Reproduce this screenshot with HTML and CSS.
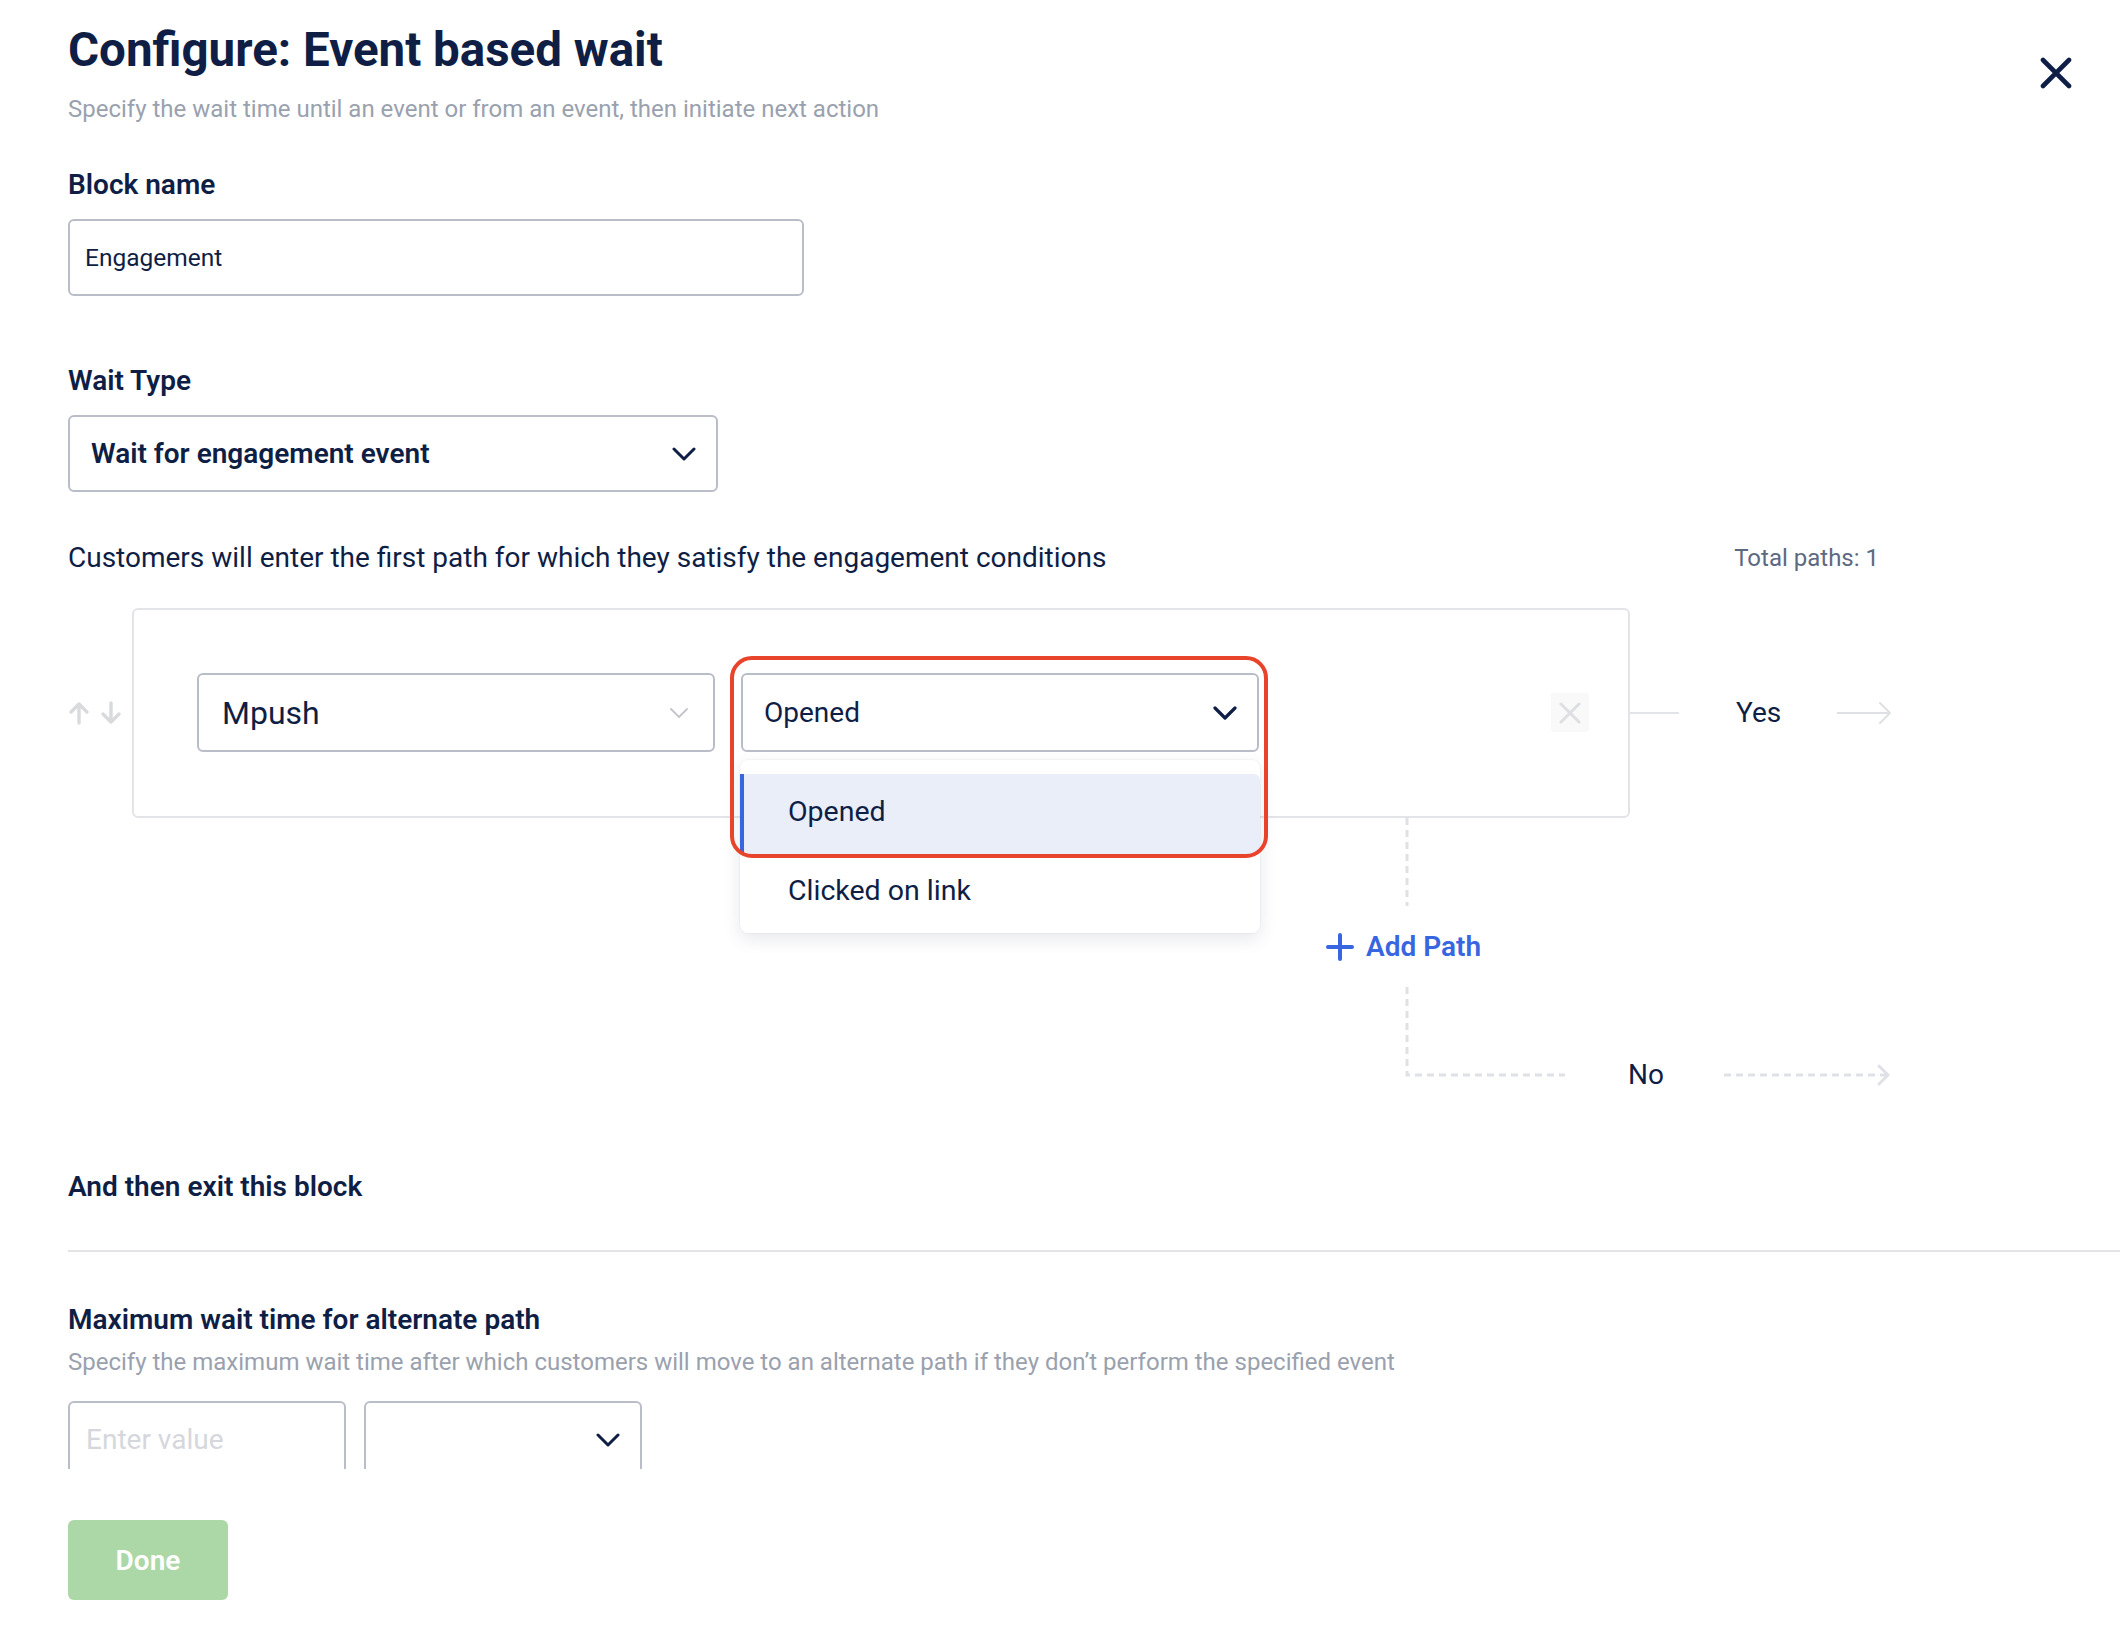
FILE: index.html
```html
<!DOCTYPE html>
<html lang="en">
<head>
<meta charset="utf-8">
<title>Configure: Event based wait</title>
<link rel="stylesheet" href="styles.css">
</head>
<body>
<div class="page">
  <header class="header">
    <div class="header-text">
      <h1 class="title">Configure: Event based wait</h1>
      <p class="subtitle">Specify the wait time until an event or from an event, then initiate next action</p>
    </div>
    <button class="close-btn" aria-label="Close">
      <svg width="32" height="32" viewBox="0 0 32 32"><path d="M3 3 L29 29 M29 3 L3 29" fill="none" stroke="#0f1e45" stroke-width="4.6" stroke-linecap="round"/></svg>
    </button>
  </header>

  <section class="field field-block">
    <div class="label">Block name</div>
    <div class="input input-name">Engagement</div>
  </section>

  <section class="field field-wait">
    <div class="label">Wait Type</div>
    <div class="select select-wait">
      <span>Wait for engagement event</span>
      <svg width="24" height="14" viewBox="0 0 24 14"><path d="M2 2 L12 12 L22 2" fill="none" stroke="#0f1e45" stroke-width="3" stroke-linecap="round" stroke-linejoin="round"/></svg>
    </div>
  </section>

  <div class="paths-head">
    <p class="paths-desc">Customers will enter the first path for which they satisfy the engagement conditions</p>
    <span class="paths-total">Total paths: 1</span>
  </div>

  <div class="path-row">
    <div class="reorder">
      <svg width="22" height="24" viewBox="0 0 22 24"><path d="M11 22 V3 M3 11 L11 3 L19 11" fill="none" stroke="#d9dadd" stroke-width="3.4" stroke-linecap="round" stroke-linejoin="round"/></svg>
      <svg width="22" height="24" viewBox="0 0 22 24"><path d="M11 2 V21 M3 13 L11 21 L19 13" fill="none" stroke="#d9dadd" stroke-width="3.4" stroke-linecap="round" stroke-linejoin="round"/></svg>
    </div>
    <div class="path-card">
      <div class="select select-channel">
        <span>Mpush</span>
        <svg width="18" height="10" viewBox="0 0 18 10"><path d="M1 1 L9 9 L17 1" fill="none" stroke="#c3c5cb" stroke-width="1.8" stroke-linecap="round" stroke-linejoin="round"/></svg>
      </div>
      <div class="event-wrap">
        <div class="select select-event">
          <span>Opened</span>
          <svg width="24" height="14" viewBox="0 0 24 14"><path d="M2 2 L12 12 L22 2" fill="none" stroke="#0f1e45" stroke-width="3.2" stroke-linecap="round" stroke-linejoin="round"/></svg>
        </div>
        <ul class="menu">
          <li class="menu-item active">Opened</li>
          <li class="menu-item second">Clicked on link</li>
        </ul>
        <div class="highlight"></div>
      </div>
      <button class="remove-btn" aria-label="Remove path">
        <svg width="24" height="22" viewBox="0 0 24 22"><path d="M3 2 L21 20 M21 2 L3 20" fill="none" stroke="#dedfe3" stroke-width="3" stroke-linecap="round"/></svg>
      </button>
    </div>
    <div class="yes-line"></div>
    <span class="branch-label yes-label">Yes</span>
    <svg class="yes-arrow" width="56" height="24" viewBox="0 0 56 24"><path d="M0 12 H53 M43 2 L53 12 L43 22" fill="none" stroke="#dfe0e4" stroke-width="2" stroke-linecap="round" stroke-linejoin="round"/></svg>
  </div>

  <div class="branch">
    <svg class="vdash" width="4" height="88" viewBox="0 0 4 88"><line x1="2" y1="0" x2="2" y2="88" stroke="#e0e1e6" stroke-width="3" stroke-dasharray="7 5"/></svg>
    <button class="add-path">
      <svg width="28" height="28" viewBox="0 0 28 28"><path d="M14 2 V26 M2 14 H26" fill="none" stroke="#3766e0" stroke-width="4" stroke-linecap="round"/></svg>
      <span>Add Path</span>
    </button>
    <div class="no-row">
      <svg width="162" height="176" viewBox="0 0 162 176"><path d="M2 0 V88 H160" fill="none" stroke="#e0e1e6" stroke-width="3" stroke-dasharray="7 5"/></svg>
      <span class="branch-label no-label">No</span>
      <svg class="no-arrow" width="168" height="24" viewBox="0 0 168 24"><path d="M0 12 H162" fill="none" stroke="#e0e1e6" stroke-width="3" stroke-dasharray="7 5"/><path d="M155 3 L164 12 L155 21" fill="none" stroke="#e0e1e6" stroke-width="3" stroke-linecap="round" stroke-linejoin="round"/></svg>
    </div>
  </div>

  <div class="section-title exit-title">And then exit this block</div>
  <div class="divider"></div>
  <div class="section-title max-title">Maximum wait time for alternate path</div>
  <p class="hint">Specify the maximum wait time after which customers will move to an alternate path if they don’t perform the specified event</p>
  <div class="wait-inputs">
    <div class="input input-value"><span class="placeholder">Enter value</span></div>
    <div class="select select-unit">
      <svg width="24" height="14" viewBox="0 0 24 14"><path d="M2 2 L12 12 L22 2" fill="none" stroke="#0f1e45" stroke-width="3" stroke-linecap="round" stroke-linejoin="round"/></svg>
    </div>
  </div>
  <button class="done-btn">Done</button>
</div>
</body>
</html>
```

FILE: styles.css
```css
* { box-sizing: border-box; }

body {
  margin: 0;
  background: #ffffff;
  color: #0f1e45;
  font-family: Roboto, "Noto Sans", "Liberation Sans", sans-serif;
}

button {
  font-family: inherit;
  cursor: pointer;
}

.page {
  padding: 22px 0 60px 68px;
}

/* Header */
.header {
  display: flex;
  justify-content: space-between;
  align-items: flex-start;
  padding-right: 48px;
}

.title {
  margin: 0;
  font-size: 47.5px;
  line-height: 56px;
  font-weight: 700;
}

.subtitle {
  margin: 16px 0 0;
  font-size: 24px;
  line-height: 30px;
  color: #9aa1ae;
}

.close-btn {
  margin-top: 35px;
  padding: 0;
  border: 0;
  background: none;
  display: block;
  line-height: 0;
}

/* Fields */
.field-block { margin-top: 44px; }
.field-wait { margin-top: 68px; }

.label {
  font-size: 28px;
  line-height: 34px;
  font-weight: 600;
}

.input,
.select {
  display: flex;
  align-items: center;
  border: 2px solid #b9bdc7;
  border-radius: 6px;
  background: #fff;
}

.input-name {
  margin-top: 17px;
  width: 736px;
  height: 77px;
  padding-left: 15px;
  font-size: 24.5px;
}

.select {
  justify-content: space-between;
}

.select-wait {
  margin-top: 17px;
  width: 650px;
  height: 77px;
  padding: 0 20px 0 21px;
  font-size: 28px;
  font-weight: 600;
}

/* Paths */
.paths-head {
  margin-top: 49px;
  width: 1811px;
  display: flex;
  justify-content: space-between;
  align-items: center;
}

.paths-desc {
  margin: 0;
  font-size: 28px;
  line-height: 34px;
}

.paths-total {
  font-size: 24px;
  line-height: 30px;
  color: #5d6982;
}

.path-row {
  margin-top: 33px;
  display: flex;
  align-items: center;
}

.reorder {
  width: 54px;
  margin-right: 10px;
  display: flex;
  gap: 10px;
}

.path-card {
  width: 1498px;
  flex: none;
  border: 2px solid #e3e4e8;
  border-radius: 6px;
  padding: 63px 39px 64px 63px;
  display: flex;
  align-items: center;
  gap: 26px;
}

.select-channel {
  width: 518px;
  height: 79px;
  flex: none;
  padding: 0 25px 0 23px;
  font-size: 32px;
}

.event-wrap {
  position: relative;
  width: 518px;
  flex: none;
}

.select-event {
  width: 518px;
  height: 79px;
  padding: 0 20px 0 21px;
  font-size: 28px;
}

.menu {
  position: absolute;
  top: 87px;
  left: -1px;
  width: 520px;
  margin: 0;
  padding: 14px 0 7px;
  list-style: none;
  background: #fff;
  border-radius: 8px;
  box-shadow: 0 6px 18px rgba(16, 30, 67, 0.10), 0 0 0 1px rgba(16, 30, 67, 0.03);
  z-index: 2;
}

.menu-item {
  height: 72px;
  display: flex;
  align-items: center;
  padding-left: 48px;
  font-size: 28.5px;
}

.menu-item.active {
  height: 80px;
  padding-bottom: 6px;
  background: #e9eef9;
  border-left: 4px solid #3766e0;
  padding-left: 44px;
  border-radius: 0 6px 6px 0;
}

.highlight {
  position: absolute;
  left: -11px;
  top: -17px;
  width: 538px;
  height: 202px;
  border: 4px solid #e8432b;
  border-radius: 22px;
  z-index: 3;
  pointer-events: none;
}

.remove-btn {
  margin-left: auto;
  width: 38px;
  height: 39px;
  padding: 0;
  border: 0;
  border-radius: 3px;
  background: #f9f9fa;
  display: flex;
  align-items: center;
  justify-content: center;
}

.yes-line {
  width: 49px;
  height: 2px;
  background: #e3e4e8;
  flex: none;
}

.branch-label {
  font-size: 28px;
  line-height: 34px;
}

.yes-label { margin-left: 57px; }
.yes-arrow { margin-left: 56px; }

/* No branch */
.branch {
  margin-left: 1258px;
  display: flex;
  flex-direction: column;
  align-items: flex-start;
}

.vdash { margin-left: 79px; display: block; }

.add-path {
  height: 81px;
  padding: 0;
  border: 0;
  background: none;
  display: flex;
  align-items: center;
  gap: 12px;
  color: #3766e0;
  font-size: 28px;
  font-weight: 600;
}

.no-row {
  margin-left: 79px;
  display: flex;
  align-items: center;
}

.no-label { margin-left: 61px; }
.no-arrow { margin-left: 60px; }

/* Bottom sections */
.section-title {
  font-size: 28px;
  line-height: 34px;
  font-weight: 600;
}

.exit-title { margin-top: 7px; }

.divider {
  margin-top: 46px;
  height: 2px;
  background: #e3e4e8;
}

.max-title { margin-top: 51px; }

.hint {
  margin: 10px 0 0;
  font-size: 24px;
  line-height: 30px;
  color: #9aa1ae;
}

.wait-inputs {
  margin-top: 24px;
  height: 68px;
  overflow: hidden;
  display: flex;
  align-items: flex-start;
  gap: 18px;
}

.input-value {
  width: 278px;
  height: 77px;
  padding-left: 16px;
  font-size: 28px;
}

.placeholder { color: #d5d7dd; }

.select-unit {
  width: 278px;
  height: 77px;
  justify-content: flex-end;
  padding-right: 20px;
}

.done-btn {
  display: block;
  margin-top: 51px;
  width: 160px;
  height: 80px;
  border: 0;
  border-radius: 6px;
  background: #acd8a7;
  color: #ffffff;
  font-size: 28px;
  font-weight: 600;
}
```
